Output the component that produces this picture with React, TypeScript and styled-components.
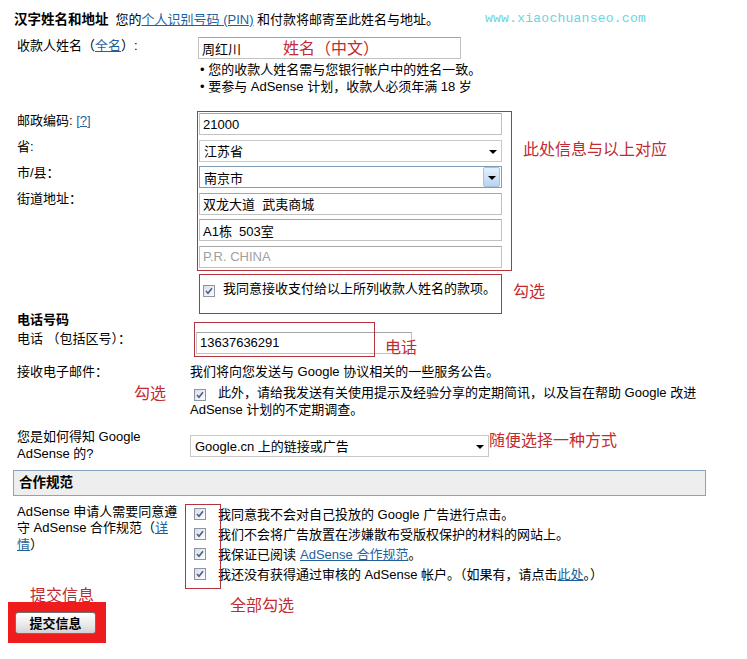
import styled, { createGlobalStyle } from 'styled-components';

const Global = createGlobalStyle`
  html, body { margin: 0; padding: 0; background: #fff; }
  body {
    font-family: "Liberation Sans", "Noto Sans CJK SC", sans-serif;
    font-size: 13px;
    color: #000;
  }
`;

const Page = styled.div`
  position: relative;
  width: 747px;
  height: 659px;
  padding: 10px 0 0 17px;
  box-sizing: border-box;
  overflow: hidden;
`;

const TitleLine = styled.div`
  display: flex;
  align-items: baseline;
  margin-left: -3px;
  line-height: 20px;
  white-space: nowrap;
`;
const Heading = styled.b`
  font-size: 13.5px;
  margin-right: 7px;
`;
const Link = styled.a`
  color: #1f5f9c;
  text-decoration: underline;
  cursor: pointer;
`;
const Watermark = styled.span`
  position: absolute;
  left: 485px;
  top: 11px;
  font-family: "Liberation Mono", monospace;
  font-size: 13px;
  letter-spacing: 0.25px;
  color: #6ad5de;
`;

/* annotations drawn over the screenshot */
const Note = styled.span<{ $x: number; $y: number }>`
  position: absolute;
  left: ${(p) => p.$x}px;
  top: ${(p) => p.$y}px;
  font-family: "Noto Sans CJK SC", sans-serif;
  font-size: 16px;
  line-height: 20px;
  color: #c22a30;
  white-space: nowrap;
  pointer-events: none;
`;
const Frame = styled.span<{ $x: number; $y: number; $w: number; $h: number }>`
  position: absolute;
  left: ${(p) => p.$x}px;
  top: ${(p) => p.$y}px;
  width: ${(p) => p.$w}px;
  height: ${(p) => p.$h}px;
  border: 1px solid #b3343c;
  box-sizing: border-box;
  pointer-events: none;
`;

const Row = styled.div<{ $top: number }>`
  position: relative;
  display: flex;
  align-items: flex-start;
  margin-top: ${(p) => p.$top}px;
`;
const Label = styled.div<{ $w: number; $lh: number }>`
  width: ${(p) => p.$w}px;
  flex: none;
  line-height: ${(p) => p.$lh}px;
`;
const Field = styled.div<{ $top?: number }>`
  position: relative;
  margin-top: ${(p) => p.$top ?? 0}px;
`;
const TextInput = styled.input<{ $w: number; $muted?: boolean }>`
  display: block;
  width: ${(p) => p.$w}px;
  height: 22px;
  box-sizing: border-box;
  margin: 0;
  padding: 0 3px;
  border: 1px solid #c2c2c2;
  border-top-color: #a6a6a6;
  font-family: "Liberation Sans", "Noto Sans CJK SC", sans-serif;
  font-size: 13px;
  color: #000;
  background: #fff;
  outline: none;
  &::placeholder {
    color: ${(p) => (p.$muted ? '#a0a0a0' : '#000')};
  }
`;
const SelectBox = styled.div<{ $w: number; $button?: boolean }>`
  display: flex;
  align-items: center;
  width: ${(p) => p.$w}px;
  height: 22px;
  box-sizing: border-box;
  padding-left: 4px;
  border: 1px solid ${(p) => (p.$button ? '#7f9db9' : '#c8c8c8')};
  background: #fff;
`;
const SelectText = styled.span`
  flex: 1;
  white-space: nowrap;
`;
const Arrow = styled.span<{ $button?: boolean }>`
  display: flex;
  align-items: center;
  justify-content: center;
  width: ${(p) => (p.$button ? 15 : 14)}px;
  height: ${(p) => (p.$button ? 18 : 20)}px;
  margin-right: 1px;
  border-radius: ${(p) => (p.$button ? 2 : 0)}px;
  border: ${(p) => (p.$button ? '1px solid #a9c1dc' : 'none')};
  background: ${(p) => (p.$button ? 'linear-gradient(180deg, #e6f0fb, #b9d3f1)' : 'transparent')};
  &::after {
    content: '';
    border-left: 4px solid transparent;
    border-right: 4px solid transparent;
    border-top: 4px solid #000;
    margin-top: 2px;
  }
`;

const Bullets = styled.ul`
  list-style: none;
  margin: 2px 0 0 183px;
  padding: 0;
  line-height: 17px;
`;

const AddressLabels = styled.div`
  width: 180px;
  flex: none;
  padding-top: 1px;
  display: flex;
  flex-direction: column;
`;
const AddressLabel = styled.div`
  height: 26px;
  line-height: 17px;
`;
const RedGroup = styled.div`
  display: flex;
  flex-direction: column;
  gap: 4.5px;
  padding: 1px 9px 2px 1px;
  border: 1px solid #b3343c;
`;

const AgreeBox = styled.div`
  position: relative;
  width: 303px;
  height: 40px;
  box-sizing: border-box;
  margin: 3px 0 0 182px;
  padding: 5px 0 0 3px;
  border: 1px solid #b3343c;
  line-height: 17px;
  white-space: nowrap;
`;

const SubHeading = styled.div`
  font-weight: bold;
  font-size: 13px;
  line-height: 12px;
`;

const Box = styled.span<{ $gap: number; $lead: number }>`
  display: inline-flex;
  align-items: center;
  justify-content: center;
  width: 12px;
  height: 12px;
  box-sizing: border-box;
  margin: 0 ${(p) => p.$gap}px 0 ${(p) => p.$lead}px;
  border: 1px solid #8d95a5;
  background: linear-gradient(135deg, #d9dce3, #ffffff);
  vertical-align: -2px;
  flex: none;
`;

function Check({ gap = 9, lead = 0 }: { gap?: number; lead?: number }) {
  return (
    <Box $gap={gap} $lead={lead}>
      <svg width="8" height="8" viewBox="0 0 8 8">
        <path d="M1 4 L3 6.3 L7 1.2" fill="none" stroke="#4d5e92" strokeWidth="1.6" />
      </svg>
    </Box>
  );
}

const Lines = styled.div`
  line-height: 17px;
  white-space: nowrap;
`;
const Para = styled.div<{ $top?: number }>`
  margin-top: ${(p) => p.$top ?? 0}px;
`;

const SectionBar = styled.div`
  width: 693px;
  height: 26px;
  box-sizing: border-box;
  margin: 7.5px 0 0 -4px;
  padding-left: 5px;
  border: 1px solid #8aa5c2;
  background: #eeeeee;
  font-weight: bold;
  font-size: 13.5px;
  line-height: 24px;
`;

const CheckList = styled.div`
  position: relative;
  display: flex;
  flex-direction: column;
`;
const CheckRow = styled.div`
  display: flex;
  align-items: center;
  height: 20px;
  white-space: pre;
`;
const Gap = styled.span`
  display: inline-block;
  width: 4px;
`;

const SubmitArea = styled.div`
  display: flex;
  flex-direction: column;
  align-items: flex-start;
  margin-top: 3px;
`;
const SubmitNote = styled.span`
  margin-left: 13px;
  font-family: "Noto Sans CJK SC", sans-serif;
  font-size: 16px;
  line-height: 15px;
  color: #c22a30;
`;
const SubmitFrame = styled.div`
  margin: 0 0 0 -9px;
  padding: 10px 10px 9px 7px;
  background: #ee1c1c;
`;
const SubmitButton = styled.button`
  display: block;
  width: 81px;
  height: 22px;
  padding: 0;
  border: 1px solid #707070;
  border-radius: 3px;
  background: linear-gradient(180deg, #ffffff, #e4e4e4 70%, #d2d2d2);
  font-family: "Noto Sans CJK SC", sans-serif;
  font-weight: bold;
  font-size: 13px;
  color: #000;
  cursor: pointer;
`;

export default function App() {
  return (
    <Page>
      <Global />
      <TitleLine>
        <Heading>汉字姓名和地址</Heading>
        您的<Link>个人识别号码 (PIN) </Link>&nbsp;和付款将邮寄至此姓名与地址。
      </TitleLine>
      <Watermark>www.xiaochuanseo.com</Watermark>

      <Row $top={7}>
        <Label $w={181} $lh={18}>
          收款人姓名（<Link>全名</Link>）:
        </Label>
        <Field>
          <TextInput $w={263} readOnly defaultValue="周红川" />
          <Note $x={85} $y={0}>姓名（中文）</Note>
        </Field>
      </Row>
      <Bullets>
        <li>• 您的收款人姓名需与您银行帐户中的姓名一致。</li>
        <li>• 要参与 AdSense 计划，收款人必须年满 18 岁</li>
      </Bullets>

      <Row $top={16}>
        <AddressLabels>
          <AddressLabel>
            邮政编码: <Link>[?]</Link>
          </AddressLabel>
          <AddressLabel>省:</AddressLabel>
          <AddressLabel>市/县：</AddressLabel>
          <AddressLabel>街道地址：</AddressLabel>
        </AddressLabels>
        <RedGroup>
          <TextInput $w={303} readOnly defaultValue="21000" />
          <SelectBox $w={303}>
            <SelectText>江苏省</SelectText>
            <Arrow />
          </SelectBox>
          <SelectBox $w={303} $button>
            <SelectText>南京市</SelectText>
            <Arrow $button />
          </SelectBox>
          <TextInput $w={303} readOnly defaultValue="双龙大道  武夷商城" />
          <TextInput $w={303} readOnly defaultValue="A1栋  503室" />
          <TextInput $w={303} readOnly placeholder="P.R. CHINA" $muted />
        </RedGroup>
        <Note $x={506} $y={27}>此处信息与以上对应</Note>
      </Row>

      <AgreeBox>
        <Check gap={8} />
        我同意接收支付给以上所列收款人姓名的款项。
        <Note $x={313} $y={5}>勾选</Note>
      </AgreeBox>

      <SubHeading>电话号码</SubHeading>
      <Row $top={6}>
        <Label $w={179} $lh={13}>
          电话 （包括区号）：
        </Label>
        <Field>
          <TextInput $w={216} readOnly defaultValue="13637636291" />
          <Frame $x={-2} $y={-10} $w={181} $h={35} />
          <Note $x={189} $y={4}>电话</Note>
        </Field>
      </Row>

      <Row $top={9.5}>
        <Label $w={173} $lh={17}>
          接收电子邮件：
        </Label>
        <Lines>
          <Para>我们将向您发送与 Google 协议相关的一些服务公告。</Para>
          <Para $top={4}>
            <Check lead={4} gap={12} />
            此外，请给我发送有关使用提示及经验分享的定期简讯，以及旨在帮助 Google 改进
            <br />
            AdSense 计划的不定期调查。
          </Para>
        </Lines>
        <Note $x={117} $y={19}>勾选</Note>
      </Row>

      <Row $top={11}>
        <Label $w={173} $lh={16.5}>
          您是如何得知 Google
          <br />
          AdSense 的?
        </Label>
        <Field $top={5.5}>
          <SelectBox $w={299}>
            <SelectText>Google.cn 上的链接或广告</SelectText>
            <Arrow />
          </SelectBox>
          <Note $x={299} $y={-6}>随便选择一种方式</Note>
        </Field>
      </Row>

      <SectionBar>合作规范</SectionBar>

      <Row $top={8}>
        <Label $w={173} $lh={16.5}>
          AdSense 申请人需要同意遵
          <br />守 AdSense 合作规范（<Link>详<br />情</Link>）
        </Label>
        <CheckList>
          <CheckRow>
            <Check lead={4} gap={12} />
            我同意我不会对自己投放的 Google 广告进行点击。
          </CheckRow>
          <CheckRow>
            <Check lead={4} gap={12} />
            我们不会将广告放置在涉嫌散布受版权保护的材料的网站上。
          </CheckRow>
          <CheckRow>
            <Check lead={4} gap={12} />
            我保证已阅读<Gap />
            <Link>AdSense 合作规范</Link>。
          </CheckRow>
          <CheckRow>
            <Check lead={4} gap={12} />
            我还没有获得通过审核的 AdSense 帐户。（如果有，请点击<Link>此处</Link>。）
          </CheckRow>
          <Frame $x={-5} $y={0} $w={36} $h={85} />
          <Note $x={40} $y={90}>全部勾选</Note>
        </CheckList>
      </Row>

      <SubmitArea>
        <SubmitNote>提交信息</SubmitNote>
        <SubmitFrame>
          <SubmitButton type="button">提交信息</SubmitButton>
        </SubmitFrame>
      </SubmitArea>
    </Page>
  );
}
